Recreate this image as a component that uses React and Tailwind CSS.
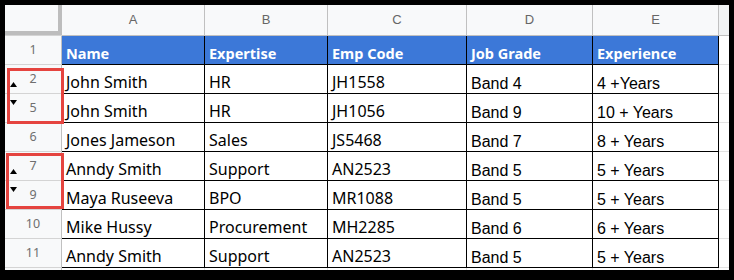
import React from 'react';

const columns = ['A', 'B', 'C', 'D', 'E'];

const rows = [
  { n: 1, header: true, cells: ['Name', 'Expertise', 'Emp Code', 'Job Grade', 'Experience'] },
  { n: 2, cells: ['John Smith', 'HR', 'JH1558', 'Band 4', '4 +Years'], mark: 'up' },
  { n: 5, cells: ['John Smith', 'HR', 'JH1056', 'Band 9', '10 + Years'], mark: 'down' },
  { n: 6, cells: ['Jones Jameson', 'Sales', 'JS5468', 'Band 7', '8 + Years'] },
  { n: 7, cells: ['Anndy Smith', 'Support', 'AN2523', 'Band 5', '5 + Years'], mark: 'up' },
  { n: 9, cells: ['Maya Ruseeva', 'BPO', 'MR1088', 'Band 5', '5 + Years'], mark: 'down' },
  { n: 10, cells: ['Mike Hussy', 'Procurement', 'MH2285', 'Band 6', '6 + Years'] },
  { n: 11, cells: ['Anndy Smith', 'Support', 'AN2523', 'Band 5', '5 + Years'] },
];

function Arrow({ dir }) {
  return (
    <svg width="7" height="5" viewBox="0 0 7 5" className="block">
      {dir === 'up' ? <polygon points="0,5 7,5 3.5,0" fill="#000" /> : <polygon points="0,0 7,0 3.5,5" fill="#000" />}
    </svg>
  );
}

function RowHeader({ row }) {
  return (
    <div className="relative h-[29px] bg-[#f8f9fa] border-r border-b border-r-[#c0c0c0] border-b-[#d4d4d4] flex items-center justify-center font-['Noto_Sans',sans-serif] text-[12.5px] text-[#6f6f6f]">
      {row.n}
      {row.mark === 'up' && (
        <div className="absolute left-[5px] top-[17px]">
          <Arrow dir="up" />
        </div>
      )}
      {row.mark === 'down' && (
        <div className="absolute left-[5px] top-[6px]">
          <Arrow dir="down" />
        </div>
      )}
    </div>
  );
}

function Cell({ text, col, header }) {
  if (header) {
    return (
      <div className="h-[29px] bg-[#3c78d8] border-r border-b border-black flex items-end pl-[4px] pb-[1px] font-['Noto_Sans',sans-serif] font-bold text-[14.5px] leading-[20px] text-white">
        {text}
      </div>
    );
  }
  const arial = col >= 3;
  return (
    <div
      className={
        arial
          ? "h-[29px] bg-white border-r border-b border-black flex items-end pl-[4px] pb-0 font-['Liberation_Sans',Arial,sans-serif] text-[16px] leading-[18px] text-black"
          : "h-[29px] bg-white border-r border-b border-black flex items-end pl-[4px] pb-0 font-['Noto_Sans',sans-serif] text-[16px] leading-[22px] text-black"
      }
    >
      {text}
    </div>
  );
}

export default function App() {
  return (
    <div className="w-[734px] h-[280px] bg-black pl-[5px] pt-[5px]">
      <div className="relative w-[724px] h-[265px] bg-white overflow-hidden">
        <div className="grid grid-cols-[57px_143px_123px_139px_126px_126px_10px]">
          {/* column letters */}
          <div className="h-[31px] bg-[#f8f9fa] border-b border-[#d4d4d4]">
            <div className="h-[30px] border-r-4 border-b-4 border-[#bdbdbd]" />
          </div>
          {columns.map((c) => (
            <div
              key={c}
              className="h-[31px] bg-[#f8f9fa] border-r border-b border-[#c0c0c0] flex items-center justify-center font-['Liberation_Sans',Arial,sans-serif] text-[13px] text-[#666]"
            >
              {c}
            </div>
          ))}
          <div className="h-[31px] bg-[#f1f3f4] border-b border-[#c0c0c0]" />

          {rows.map((row) => (
            <React.Fragment key={row.n}>
              <RowHeader row={row} />
              {row.cells.map((t, i) => (
                <Cell key={i} text={t} col={i} header={row.header} />
              ))}
              <div className="h-[29px] bg-white border-b border-[#e2e2e2]" />
            </React.Fragment>
          ))}

          <div className="h-[2px] bg-[#f8f9fa] border-r border-[#c0c0c0]" />
          <div className="h-[2px] bg-white border-r border-[#e2e2e2]" />
          <div className="h-[2px] bg-white border-r border-[#e2e2e2]" />
          <div className="h-[2px] bg-white border-r border-[#e2e2e2]" />
          <div className="h-[2px] bg-white border-r border-[#e2e2e2]" />
          <div className="h-[2px] bg-white border-r border-[#e2e2e2]" />
          <div className="h-[2px] bg-white" />
        </div>

        {/* highlighted row groups */}
        <div className="absolute left-[2px] top-[63px] w-[57px] h-[56px] border-[3px] border-[#e5443f]" />
        <div className="absolute left-[1px] top-[148px] w-[58px] h-[56px] border-[3px] border-[#e5443f]" />
      </div>
    </div>
  );
}
